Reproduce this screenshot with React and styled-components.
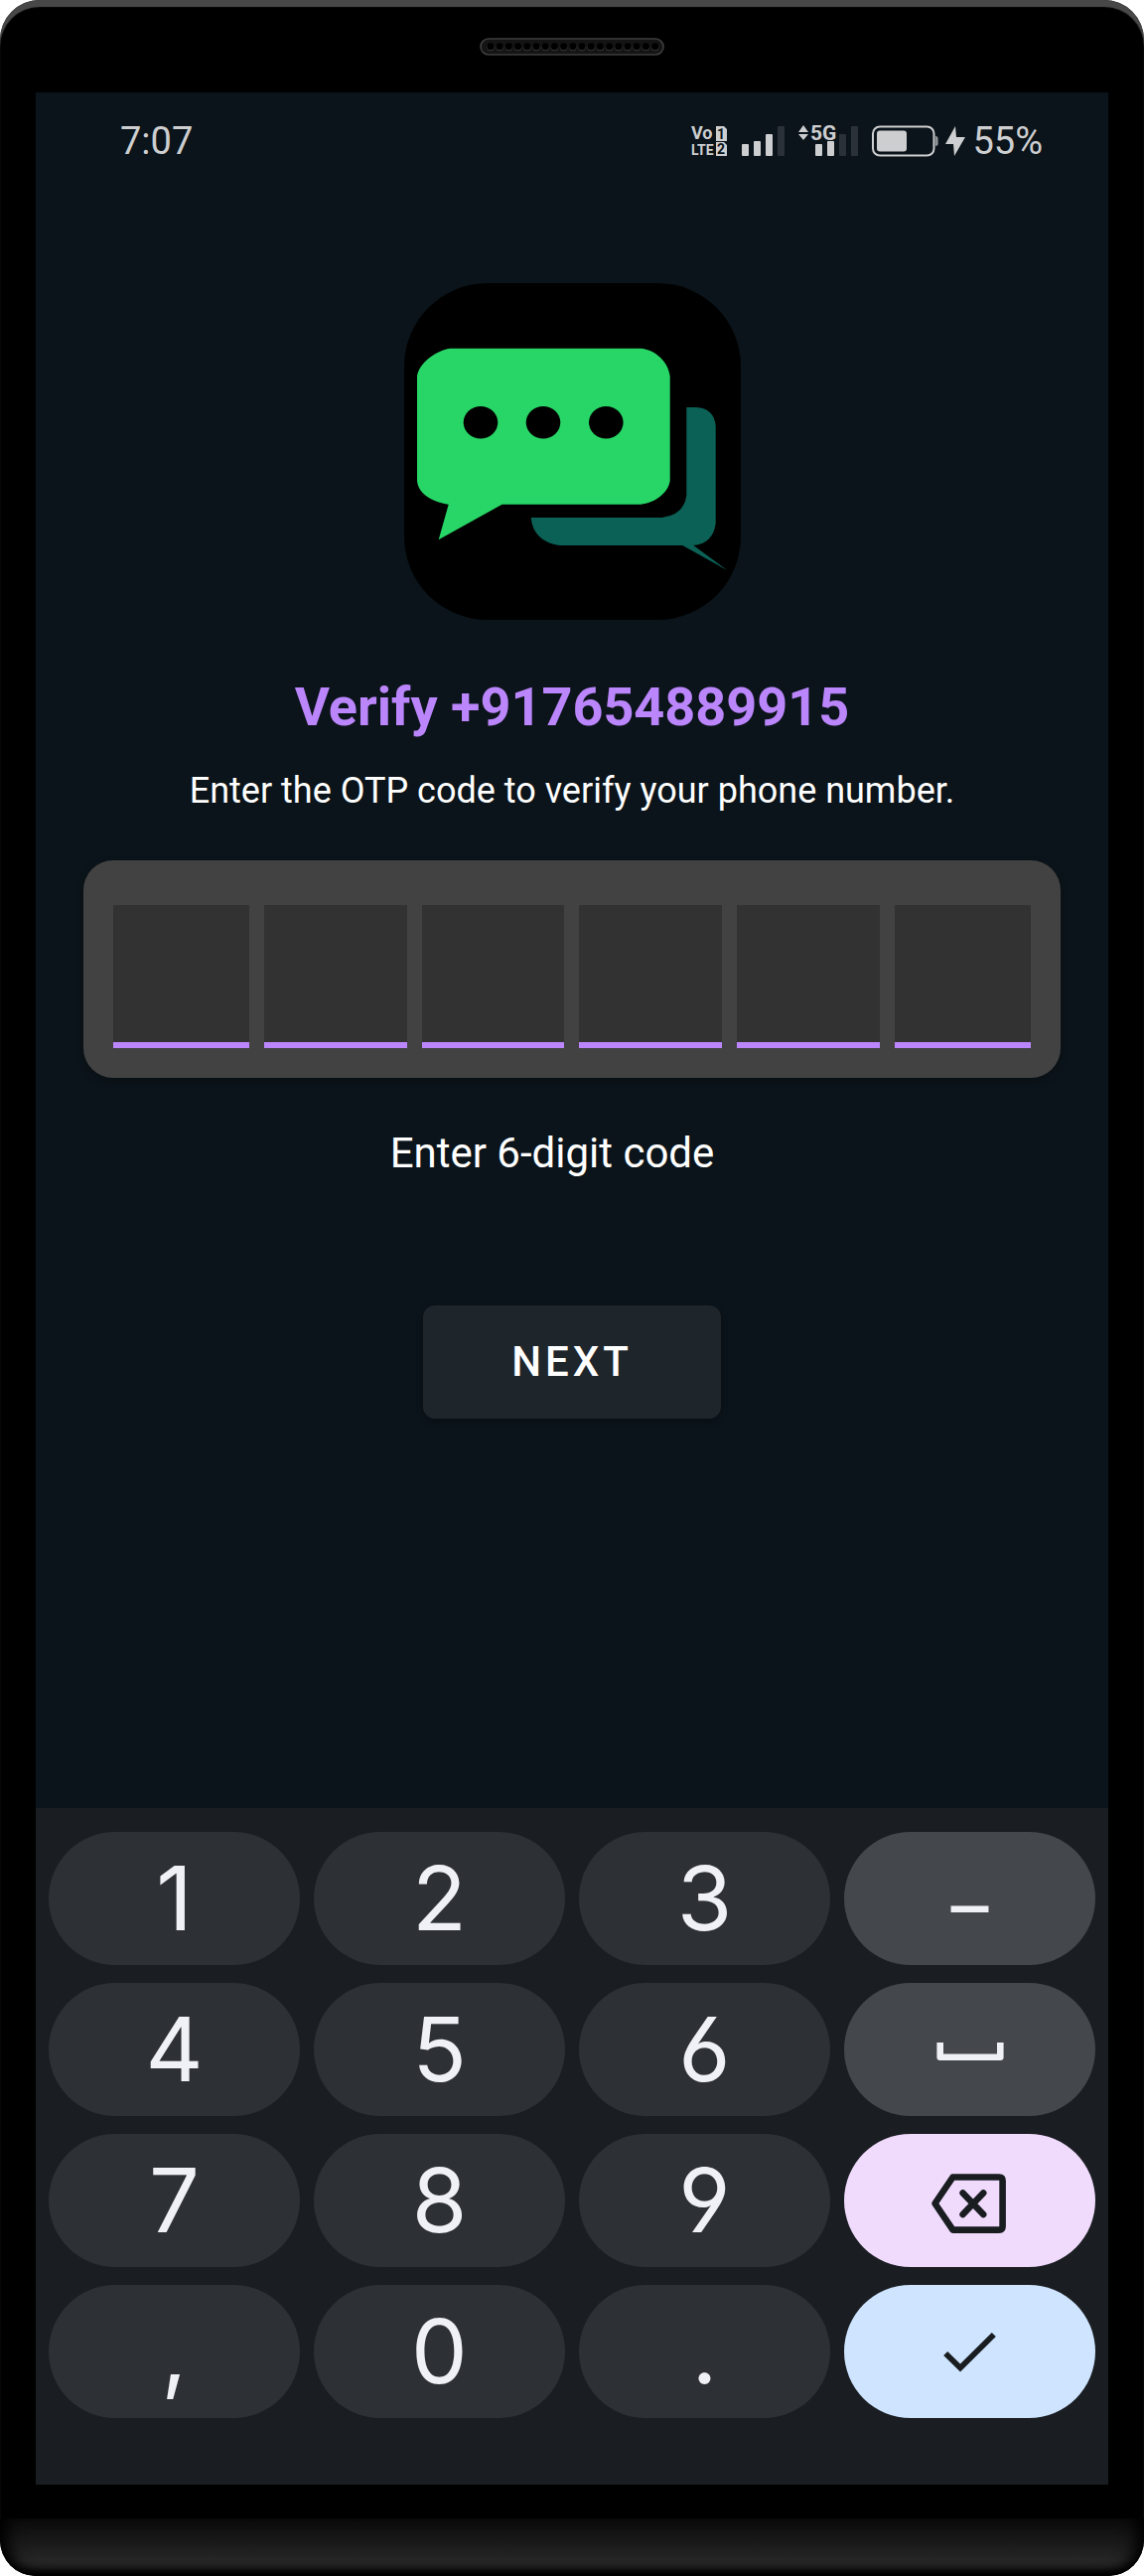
import React, { useState } from 'react';
import styled, { createGlobalStyle } from 'styled-components';

const GlobalStyle = createGlobalStyle`
  *, *::before, *::after { box-sizing: border-box; }
  body { margin: 0; background: #fff; font-family: Roboto, "Liberation Sans", sans-serif; }
  h1, p { margin: 0; }
  svg { display: block; flex: none; overflow: visible; }
`;

const Phone = styled.div`
  display: flex;
  flex-direction: column;
  min-height: 100vh;
  background: #000;
  border-radius: 40px 40px 36px 36px;
  overflow: hidden;
  box-shadow: inset 0 7px 1px #484848;
`;

const TopBezel = styled.div`
  display: flex;
  justify-content: center;
  height: 93px;
  padding-top: 38px;
`;

const BottomBezel = styled.div`
  height: 58px;
  margin-top: 34px;
  border-radius: 0 0 36px 36px;
  background: linear-gradient(#0b0b0b, #1a1a1a 45%, #262626 72%, #222 84%, #000);
  box-shadow: inset 16px 0 16px -8px #000, inset -16px 0 16px -8px #000, inset 0 -8px 12px -6px #000;
`;

const Screen = styled.div`
  display: flex;
  flex: 1;
  flex-direction: column;
  margin: 0 36px;
  background: #0b141a;
`;

const StatusBar = styled.header`
  display: flex;
  align-items: center;
  justify-content: space-between;
  height: 98px;
  padding: 0 66px 0 85px;
  color: #cdced0;
  font-size: 38px;
  line-height: 44px;
`;

const StatusIcons = styled.div`
  display: flex;
  align-items: center;
  gap: 14px;
`;

const PowerGroup = styled.div`
  display: flex;
  align-items: center;
  gap: 7px;
`;

const Content = styled.main`
  display: flex;
  flex: 1;
  flex-direction: column;
  align-items: center;
  padding: 94px 48px 0;
`;

const Title = styled.h1`
  margin-top: 56px;
  color: #bb86fc;
  font-size: 54px;
  font-weight: 700;
  line-height: 64px;
`;

const Subtitle = styled.p`
  margin-top: 30px;
  color: #fff;
  font-size: 36px;
  line-height: 44px;
`;

const CodeCard = styled.div`
  display: grid;
  grid-template-columns: 137fr repeat(4, 144fr) 137fr;
  gap: 15px;
  width: 100%;
  margin-top: 48px;
  padding: 45px 30px 30px;
  border-radius: 30px;
  background: #424242;
  box-shadow: 0 3px 8px rgba(0, 0, 0, 0.2);
`;

const Digit = styled.input`
  width: 100%;
  min-width: 0;
  height: 144px;
  padding: 0;
  border: 0;
  border-bottom: 6px solid #bb86fc;
  border-radius: 0;
  outline: 0;
  background: #323232;
  color: #fff;
  font: 54px Roboto, sans-serif;
  text-align: center;
`;

const CodeLabel = styled.label`
  margin-top: 51px;
  padding-right: 40px;
  color: #fff;
  font-size: 42px;
  line-height: 50px;
`;

const NextButton = styled.button`
  width: 300px;
  height: 114px;
  margin-top: 128px;
  border: 0;
  border-radius: 12px;
  background: #1e252b;
  box-shadow: 0 3px 8px rgba(0, 0, 0, 0.2);
  color: #fff;
  font: 500 42px/50px Roboto, sans-serif;
  letter-spacing: 4px;
`;

const Keypad = styled.div`
  display: grid;
  grid-template-columns: repeat(4, 1fr);
  gap: 18px 14px;
  padding: 24px 13px 67px;
  background: #1a1d21;
`;

const keyTones = {
  plain: { background: '#2d3035', color: '#eff1f6', font: 'Inter' },
  side: { background: '#44474c', color: '#eff1f6', font: '"Open Sans"' },
  erase: { background: '#f0dbfd', color: '#191d20', font: 'Inter' },
  done: { background: '#cee4ff', color: '#191d20', font: 'Inter' },
};

const Key = styled.button`
  display: flex;
  align-items: center;
  justify-content: center;
  height: 134px;
  padding: 0;
  border: 0;
  border-radius: 67px;
  background: ${({ $tone }) => keyTones[$tone].background};
  color: ${({ $tone }) => keyTones[$tone].color};
  font-family: ${({ $tone }) => keyTones[$tone].font}, Roboto, sans-serif;
  font-size: 90px;
  line-height: 134px;
  font-feature-settings: "cv03", "cv04";
`;

const holes = Array.from({ length: 19 }, (_, i) => 11 + i * 9.2);

const Speaker = () => (
  <svg width="186" height="18" viewBox="0 0 186 18" aria-hidden="true">
    <rect x="1" y="1" width="184" height="16" rx="8" fill="#141414" stroke="#3e3e3e" strokeWidth="1.6" />
    {holes.map((x) => (
      <g key={x}>
        <circle cx={x} cy="9.6" r="3.7" fill="#4a4a4a" />
        <circle cx={x} cy="8.8" r="3.6" fill="#000" />
      </g>
    ))}
  </svg>
);

const VoLte = () => (
  <svg width="37" height="32" viewBox="0 0 37 32" role="img" aria-label="VoLTE">
    <g fill="#cdced0" fontFamily="Roboto, sans-serif" fontWeight="700">
      <text x="0" y="14" fontSize="18">Vo</text>
      <text x="0" y="30" fontSize="14">LTE</text>
      <path d="M25 1h8l3 3v12H25zM25 17h8l3 3v11H25z" />
      <g fill="#0b141a" fontSize="14">
        <text x="26" y="14">1</text>
        <text x="26" y="29">2</text>
      </g>
    </g>
  </svg>
);

const Signal = () => (
  <svg width="43" height="32" viewBox="0 0 43 32" role="img" aria-label="Signal">
    <g fill="#cdced0">
      <rect x="0" y="19" width="7" height="12" rx="1" />
      <rect x="12" y="16" width="7" height="15" rx="1" />
      <rect x="24" y="9" width="7" height="22" rx="1" />
      <rect x="36" y="1" width="7" height="30" rx="1" fill="#2a3138" />
    </g>
  </svg>
);

const Signal5G = () => (
  <svg width="60" height="36" viewBox="0 0 60 36" role="img" aria-label="5G signal">
    <g fill="#cdced0">
      <path d="M0 9 5 2l5 7zM0 11h10l-5 6z" />
      <text x="12" y="17" fontSize="21" fontWeight="700" fontFamily="Roboto, sans-serif">5G</text>
      <rect x="17" y="21" width="7" height="12" rx="1" />
      <rect x="29" y="18" width="7" height="15" rx="1" />
    </g>
    <rect x="41" y="11" width="7" height="22" rx="1" fill="#2a3138" />
    <rect x="53" y="3" width="7" height="30" rx="1" fill="#2a3138" />
  </svg>
);

const Battery = () => (
  <svg width="67" height="32" viewBox="0 0 67 32" role="img" aria-label="Battery">
    <rect x="1" y="1.5" width="61.5" height="29" rx="7" fill="none" stroke="#cdced0" strokeWidth="2" />
    <rect x="5" y="5.5" width="30" height="21" rx="3" fill="#cdced0" />
    <path d="M64 11q2.6 0 2.6 2v6q0 2-2.6 2z" fill="#8f9396" />
  </svg>
);

const Bolt = () => (
  <svg width="20" height="32" viewBox="0 0 20 32" aria-hidden="true">
    <path d="M10 1 0 19h8l1 12 11-19h-9z" fill="#cdced0" />
  </svg>
);

const Logo = () => (
  <svg width="339" height="339" viewBox="0 0 339 339" role="img" aria-label="Chat">
    <rect width="339" height="339" rx="84" />
    <path
      fill="#27d666"
      d="M46 65.7H238C253 67 266 79 267.7 93.7V198.7C266 211 253 221 238 222.7H98.7L34.7 258.3 44.7 222.7C28 220 14 212 13 198.7V93.7C15 80 32 68 46 65.7z"
    />
    <ellipse cx="77" cy="140.3" rx="17.3" ry="16.3" />
    <ellipse cx="140" cy="140.3" rx="17.3" ry="16.3" />
    <ellipse cx="203.3" cy="140.3" rx="17.3" ry="16.3" />
    <path
      fill="#0b6156"
      d="M284.3 125H294Q312 126 313.7 143.7V242Q311 262 291.3 264L325.7 289.3 280.3 264H156.3Q130 260 127.7 236H259.7Q282 233 284.3 213.7z"
    />
  </svg>
);

const SpaceIcon = () => (
  <svg width="68" height="22" viewBox="0 -4 68 22" aria-hidden="true">
    <path d="M3.7 0v14.7h60.6V0" fill="none" stroke="currentColor" strokeWidth="6.6" strokeLinejoin="round" />
  </svg>
);

const EraseIcon = () => (
  <svg width="78" height="66" viewBox="938 2182 78 66" aria-hidden="true">
    <g fill="none" stroke="currentColor" strokeWidth="6.6" strokeLinejoin="round" strokeLinecap="round">
      <path d="M941.5 2218 959.5 2191.5H1006q3.6 0 3.6 3.6V2241q0 3.6-3.6 3.6H959.5z" />
      <path d="M969.6 2207.5 990.2 2229M990.2 2207.5 969.6 2229" />
    </g>
  </svg>
);

const CheckIcon = () => (
  <svg width="54" height="40" viewBox="950 2347 54 40" aria-hidden="true">
    <path d="M952.2 2369 967 2383.5 1000.8 2350" fill="none" stroke="currentColor" strokeWidth="5.8" />
  </svg>
);

const keys = [
  ['1'], ['2'], ['3'], ['–', 'side'],
  ['4'], ['5'], ['6'], [' ', 'side', 'Space', SpaceIcon],
  ['7'], ['8'], ['9'], ['', 'erase', 'Backspace', EraseIcon],
  [','], ['0'], ['.'], ['', 'done', 'Done', CheckIcon],
];

export default function App() {
  const [code, setCode] = useState('');

  const press = (value, tone) => {
    if (tone === 'erase') setCode((c) => c.slice(0, -1));
    else if (/^\d$/.test(value)) setCode((c) => (c + value).slice(0, 6));
  };

  return (
    <>
      <GlobalStyle />
      <Phone>
        <TopBezel>
          <Speaker />
        </TopBezel>
        <Screen>
          <StatusBar>
            <time>7:07</time>
            <StatusIcons>
              <VoLte />
              <Signal />
              <Signal5G />
              <PowerGroup>
                <Battery />
                <Bolt />
                <span>55%</span>
              </PowerGroup>
            </StatusIcons>
          </StatusBar>
          <Content>
            <Logo />
            <Title>Verify +917654889915</Title>
            <Subtitle>Enter the OTP code to verify your phone number.</Subtitle>
            <CodeCard>
              {[0, 1, 2, 3, 4, 5].map((i) => (
                <Digit
                  key={i}
                  id={`digit-${i + 1}`}
                  aria-label={`Digit ${i + 1}`}
                  inputMode="numeric"
                  maxLength={1}
                  value={code[i] || ''}
                  onChange={(e) => press(e.target.value, 'plain')}
                />
              ))}
            </CodeCard>
            <CodeLabel htmlFor="digit-1">Enter 6-digit code</CodeLabel>
            <NextButton type="button">NEXT</NextButton>
          </Content>
          <Keypad>
            {keys.map(([value, tone = 'plain', label, Icon], i) => (
              <Key key={i} type="button" $tone={tone} aria-label={label} onClick={() => press(value, tone)}>
                {Icon ? <Icon /> : value}
              </Key>
            ))}
          </Keypad>
        </Screen>
        <BottomBezel />
      </Phone>
    </>
  );
}
